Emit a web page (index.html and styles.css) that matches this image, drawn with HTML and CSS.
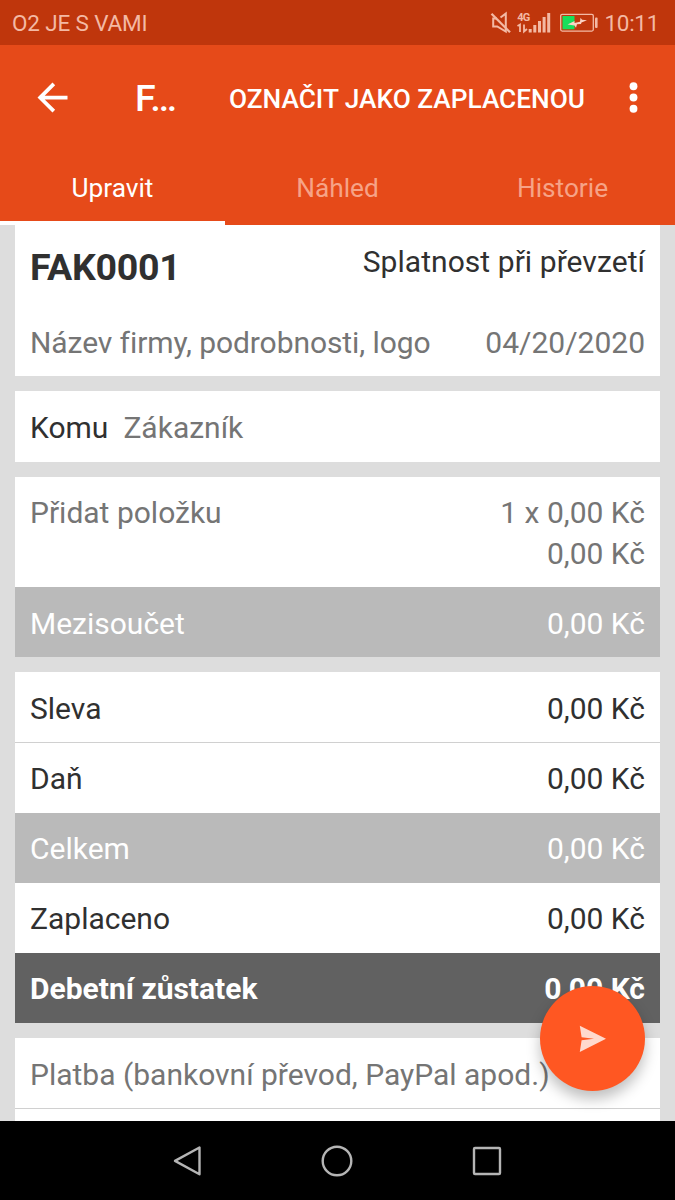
FILE: index.html
```html
<!DOCTYPE html>
<html lang="cs">
<head>
    <meta charset="UTF-8">
    <meta name="viewport" content="width=device-width, initial-scale=1.0">
    <title>Faktura FAK0001</title>
    <link rel="stylesheet" href="styles.css">
</head>
<body>

    <div class="screen">
        <!-- Status bar -->
        <div class="status-bar">
            <span class="carrier">O2 JE S VAMI</span>
            <svg class="status-icons" width="110" height="24" viewBox="0 0 110 24">
                <!-- Muted -->
                <g fill="none" stroke="#f3b9a4" stroke-width="2">
                    <path d="M7 7.5H3.2v8h4l8.6 5V2.6L10.5 6.5"/>
                    <path d="M1.5 2.8l18.500 18.500" stroke-width="2.3"/>
                </g>
                <!-- Mobile data -->
                <text class="net" x="27.2" y="10">4G</text>
                <g fill="none" stroke="#f3b9a4" stroke-width="1.8">
                    <path d="M27.5 15l2.500-1.500V21M34 13.5V20.5l3-2.500"/>
                </g>
                <g fill="#f3b9a4">
                    <rect x="38.7" y="18" width="3" height="3.5"/>
                    <rect x="43.3" y="14" width="3" height="7.5"/>
                    <rect x="48" y="10" width="3" height="11.5"/>
                    <rect x="52.6" y="6" width="3" height="15.5"/>
                    <rect x="57.2" y="2" width="3" height="19.5"/>
                </g>
                <!-- Battery -->
                <rect x="70.7" y="3.3" width="32.6" height="16.8" rx="1.5" fill="none" stroke="#f3b9a4" stroke-width="1.3"/>
                <rect x="72.5" y="5" width="12" height="13.3" fill="#17df5b"/>
                <rect x="105" y="6.5" width="2.6" height="10.5" rx="1" fill="#f3b9a4"/>
                <path d="M77.5 13.5L84.5 10V12L90 10.8L90.5 6.8L92 8.8L97 9.2L91.500 11.500L91 13L87 13.2L86 16.8L84.500 14.500Z" fill="#fbd3c4"/>
            </svg>
            <span class="clock">10:11</span>
        </div>

        <!-- App bar with tabs -->
        <header>
            <div class="toolbar">
                <svg class="back" width="45" height="45" viewBox="0 0 24 24">
                    <path d="M20 11H7.830l5.590-5.590L12 4l-8 8 8 8 1.410-1.410L7.830 13H20v-2z" fill="#fff"/>
                </svg>
                <h1>F…</h1>
                <button class="mark-paid">OZNAČIT JAKO ZAPLACENOU</button>
                <svg class="more" width="45" height="45" viewBox="0 0 24 24" fill="#fff">
                    <circle cx="12" cy="6" r="2.1"/>
                    <circle cx="12" cy="12" r="2.1"/>
                    <circle cx="12" cy="18" r="2.1"/>
                </svg>
            </div>
            <nav class="tabs">
                <a class="tab active">Upravit</a>
                <a class="tab">Náhled</a>
                <a class="tab">Historie</a>
            </nav>
        </header>

        <!-- Invoice form -->
        <main>
            <section class="card invoice-head">
                <div class="line">
                    <h2>FAK0001</h2>
                    <span class="due">Splatnost při převzetí</span>
                </div>
                <div class="line muted">
                    <span class="company">Název firmy, podrobnosti, logo</span>
                    <span>04/20/2020</span>
                </div>
            </section>

            <section class="card">
                <div class="row client">
                    <span>Komu</span>
                    <span class="muted">Zákazník</span>
                </div>
            </section>

            <section class="card">
                <div class="item muted">
                    <span>Přidat položku</span>
                    <span class="price">1 x 0,00 Kč<br>0,00 Kč</span>
                </div>
                <div class="row subtotal"><span>Mezisoučet</span><span>0,00 Kč</span></div>
            </section>

            <section class="card">
                <div class="row"><span>Sleva</span><span>0,00 Kč</span></div>
                <div class="row divided"><span>Daň</span><span>0,00 Kč</span></div>
                <div class="row subtotal"><span>Celkem</span><span>0,00 Kč</span></div>
                <div class="row"><span>Zaplaceno</span><span>0,00 Kč</span></div>
                <div class="row balance"><span>Debetní zůstatek</span><span>0,00 Kč</span></div>
            </section>

            <section class="card">
                <div class="row muted"><span>Platba (bankovní převod, PayPal apod.)</span></div>
                <div class="row divided"></div>
            </section>

            <button class="fab">
                <svg width="30" height="30" viewBox="0 0 30 30">
                    <path d="M1.8 1.8L28 14.8L1.8 28L3.6 16.300L16 14.8L3.6 13.3Z" fill="#ffd9cd"/>
                </svg>
            </button>
        </main>

        <!-- System navigation -->
        <footer class="nav-bar">
            <svg width="34" height="34" viewBox="0 0 34 34"><path d="M29.5 3.5V30.2L5 16.9Z"/></svg>
            <svg width="34" height="34" viewBox="0 0 34 34"><circle cx="17" cy="17" r="14.3"/></svg>
            <svg width="34" height="34" viewBox="0 0 34 34"><rect x="4" y="4" width="26" height="26" rx="1"/></svg>
        </footer>
    </div>

</body>
</html>
```

FILE: styles.css
```css
/* General Styles */
* {
    margin: 0;
    padding: 0;
    box-sizing: border-box;
}

body {
    font-family: Roboto, "Noto Sans", sans-serif;
    font-size: 30px;
    line-height: 35px;
    color: #303030;
    background-color: #ddd;
}

.screen {
    display: flex;
    flex-direction: column;
    height: 1200px;
    overflow: hidden;
}

button {
    border: none;
    background: none;
    font-family: inherit;
    cursor: pointer;
}

/* Status bar */
.status-bar {
    display: flex;
    align-items: center;
    flex: none;
    height: 45px;
    padding: 2px 16px 0 12px;
    background-color: #bf360c;
    color: #f3b9a4;
    font-size: 22.5px;
}

.carrier {
    letter-spacing: -0.15px;
}

.status-icons {
    margin: -2px 4px 0 auto;
}

.net {
    font-size: 11px;
    font-weight: bold;
    letter-spacing: -0.8px;
    fill: #f3b9a4;
}

.clock {
    letter-spacing: -0.3px;
}

/* App bar */
header {
    flex: none;
    height: 180px;
    background-color: #e64a19;
    color: #fff;
}

.toolbar {
    display: flex;
    align-items: center;
    height: 105px;
    padding: 0 19px 0 30px;
}

h1 {
    width: 94px;
    margin-left: 60px;
    padding-top: 2px;
    font-size: 37.5px;
    font-weight: 500;
    letter-spacing: -0.8px;
}

.mark-paid {
    padding-top: 2px;
    color: #fff;
    font-size: 26.25px;
    font-weight: 500;
    white-space: nowrap;
}

.more {
    margin-left: auto;
}

.tabs {
    display: grid;
    grid-template-columns: 1fr 1fr 1fr;
    height: 75px;
}

.tab {
    padding-top: 21px;
    text-align: center;
    font-size: 26.25px;
    color: #f6a387;
    border-bottom: 4px solid transparent;
}

.tab.active {
    color: #fff;
    border-bottom-color: #fff;
}

/* Form */
main {
    position: relative;
    display: flex;
    flex-direction: column;
    gap: 15px;
    flex: none;
    height: 896px;
    padding: 0 15px;
    overflow: hidden;
}

.card {
    flex: none;
    background-color: #fff;
}

.muted {
    color: #757575;
}

.invoice-head {
    display: flex;
    flex-direction: column;
    justify-content: space-between;
    height: 151px;
    padding: 19px 15px 16px;
}

.line {
    display: flex;
    justify-content: space-between;
}

.due {
    letter-spacing: 0.06px;
}

.company {
    letter-spacing: -0.08px;
}

h2 {
    padding-top: 6px;
    font-size: 37.5px;
    font-weight: bold;
    letter-spacing: -0.25px;
}

.row {
    display: flex;
    align-items: center;
    justify-content: space-between;
    height: 70.2px;
    padding: 2px 15px 0;
}

.client {
    justify-content: flex-start;
    gap: 15px;
    height: 71px;
}

.divided {
    border-top: 1px solid #d0d0d0;
}

.item {
    display: flex;
    justify-content: space-between;
    height: 110px;
    padding: 15px 15px 0;
    line-height: 41px;
}

.price {
    text-align: right;
}

.subtotal {
    background-color: #bababa;
    color: #fff;
}

.balance {
    padding-top: 1px;
    background-color: #616161;
    color: #fff;
    font-weight: bold;
}

/* Floating send button */
.fab {
    position: absolute;
    right: 30px;
    bottom: 30px;
    display: flex;
    align-items: center;
    justify-content: center;
    width: 105px;
    height: 105px;
    border-radius: 50%;
    background-color: #ff5722;
    box-shadow: 0 8px 14px rgba(0, 0, 0, 0.25);
}

/* Navigation bar */
.nav-bar {
    display: flex;
    align-items: center;
    justify-content: center;
    gap: 116px;
    flex: none;
    height: 79px;
    padding-right: 1px;
    background-color: #000;
}

.nav-bar svg {
    fill: none;
    stroke: #b5b5b5;
    stroke-width: 2.4;
    stroke-linejoin: round;
}
```
